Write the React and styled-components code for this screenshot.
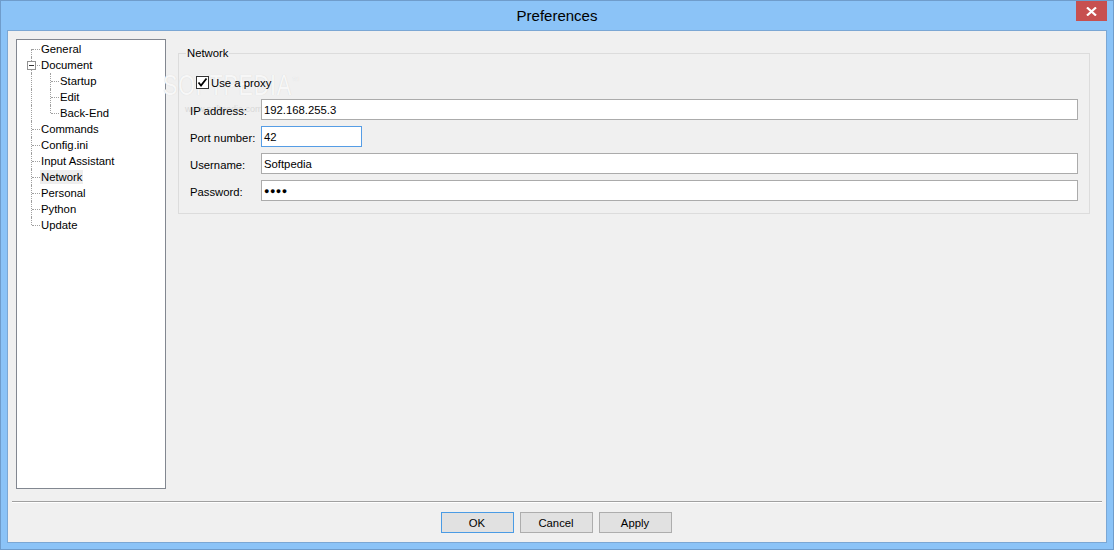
import React from 'react'
import styled, { createGlobalStyle, css } from 'styled-components'

const tree = [
	{ label: 'General', level: 0 },
	{ label: 'Document', level: 0, expanded: true },
	{ label: 'Startup', level: 1 },
	{ label: 'Edit', level: 1 },
	{ label: 'Back-End', level: 1, last: true },
	{ label: 'Commands', level: 0 },
	{ label: 'Config.ini', level: 0 },
	{ label: 'Input Assistant', level: 0 },
	{ label: 'Network', level: 0, selected: true },
	{ label: 'Personal', level: 0 },
	{ label: 'Python', level: 0 },
	{ label: 'Update', level: 0, last: true },
]

const fields = [
	{ label: 'IP address:', value: '192.168.255.3' },
	{ label: 'Port number:', value: '42', narrow: true, focused: true },
	{ label: 'Username:', value: 'Softpedia' },
	{ label: 'Password:', value: '●●●●', secret: true },
]

export default function App() {
	return (
		<>
			<GlobalStyle />
			<Frame>
				<TitleBar>
					<span />
					<Title>Preferences</Title>
					<CloseButton>
						<svg width="11" height="9" viewBox="0 0 11 9">
							<path d="M1 0.5 L10 8.5 M10 0.5 L1 8.5" stroke="#fff" strokeWidth="2.2" />
						</svg>
					</CloseButton>
				</TitleBar>
				<Client>
					<Main>
						<Tree>
							{tree.map((item, i) => (
								<TreeRow key={item.label}>
									{item.level === 1 && <Guide pass />}
									<Guide first={i === 0} last={item.last}>
										{item.expanded && <Expander />}
									</Guide>
									<TreeLabel selected={item.selected}>{item.label}</TreeLabel>
								</TreeRow>
							))}
						</Tree>
						<Pane>
							<Watermark>
								<span>SOFTPEDIA<sup>™</sup></span>
								<small>www.softpedia.com</small>
							</Watermark>
							<Group>
								<Legend>Network</Legend>
								<CheckRow>
									<svg width="13" height="13" viewBox="0 0 13 13">
										<rect x="0.5" y="0.5" width="12" height="12" fill="#fff" stroke="#333" />
										<path d="M2.5 6.5 L5 9.5 L10.5 2.5" fill="none" stroke="#000" strokeWidth="1.8" />
									</svg>
									<span>Use a proxy</span>
								</CheckRow>
								<Form>
									{fields.map(f => (
										<React.Fragment key={f.label}>
											<FieldLabel>{f.label}</FieldLabel>
											<Input narrow={f.narrow} focused={f.focused} secret={f.secret}>{f.value}</Input>
										</React.Fragment>
									))}
								</Form>
							</Group>
						</Pane>
					</Main>
					<Separator />
					<Buttons>
						<Button primary>OK</Button>
						<Button>Cancel</Button>
						<Button>Apply</Button>
					</Buttons>
				</Client>
			</Frame>
		</>
	)
}

const GlobalStyle = createGlobalStyle`
	html, body {
		margin: 0;
		padding: 0;
		background: #8bc3f7;
	}
	body {
		font-family: "Liberation Sans", Arial, sans-serif;
		font-size: 11.3px;
		color: #000;
	}
`

const Frame = styled.div`
	width: 1114px;
	height: 550px;
	box-sizing: border-box;
	border: 1px solid #6f9ccb;
	background: #8bc3f7;
	padding: 0 6px 6px;
	display: flex;
	flex-direction: column;
`

const TitleBar = styled.div`
	height: 29px;
	flex: none;
	display: grid;
	grid-template-columns: 1fr auto 1fr;
	align-items: start;
`

const Title = styled.div`
	align-self: center;
	font-size: 15px;
	line-height: 18px;
	padding-top: 1px;
	color: #000;
`

const CloseButton = styled.div`
	justify-self: end;
	width: 31px;
	height: 20px;
	background: #c75050;
	display: flex;
	align-items: center;
	justify-content: center;
`

const Client = styled.div`
	flex: 1;
	border: 1px solid #7ba7d4;
	background: #f0f0f0;
	display: flex;
	flex-direction: column;
	padding: 8px 0 9px;
	min-height: 0;
`

const Main = styled.div`
	flex: 1;
	display: flex;
	gap: 12px;
	padding: 0 16px 0 8px;
	min-height: 0;
`

const Tree = styled.div`
	width: 150px;
	box-sizing: border-box;
	border: 1px solid #828790;
	background: #fff;
	padding: 1px 0 0 5px;
	flex: none;
`

const TreeRow = styled.div`
	display: flex;
	align-items: center;
	height: 16px;
`

const dotted = '1px dotted #a0a0a0'

const Guide = styled.span`
	position: relative;
	width: 19px;
	height: 16px;
	flex: none;

	&::before {
		content: '';
		position: absolute;
		left: 9px;
		top: ${p => (p.first ? '8px' : '0')};
		bottom: ${p => (p.last ? '8px' : '0')};
		border-left: ${dotted};
	}

	${p => !p.pass && css`
		&::after {
			content: '';
			position: absolute;
			left: 10px;
			top: 8px;
			width: 8px;
			border-top: ${dotted};
		}
	`}
`

const Expander = styled.span`
	position: absolute;
	left: 5px;
	top: 4px;
	width: 7px;
	height: 7px;
	border: 1px solid #919191;
	background: #fff;
	z-index: 1;

	&::after {
		content: '';
		position: absolute;
		left: 1px;
		top: 3px;
		width: 5px;
		height: 1px;
		background: #333;
	}
`

const TreeLabel = styled.span`
	padding: 0 1px;
	margin-left: -1px;
	line-height: 14px;
	white-space: nowrap;
	background: ${p => (p.selected ? '#eeeeee' : 'transparent')};
`

const Pane = styled.div`
	flex: 1;
	position: relative;
	padding-top: 8px;
`

const Group = styled.fieldset`
	position: relative;
	margin: 0;
	border: 1px solid #dcdcdc;
	padding: 16px 11px 12px 11px;
`

const Legend = styled.legend`
	padding: 0 1px;
	margin-left: -4px;
	line-height: 13px;
	color: #000;
`

const CheckRow = styled.label`
	display: flex;
	align-items: center;
	gap: 2px;
	height: 13px;
	margin: 0 0 10px 6px;

	svg {
		flex: none;
	}
`

const Form = styled.div`
	display: grid;
	grid-template-columns: 71px 1fr;
	row-gap: 6px;
	align-items: center;
`

const FieldLabel = styled.div`
	white-space: nowrap;
	padding-top: 2px;
`

const Input = styled.div`
	height: 21px;
	box-sizing: border-box;
	width: ${p => (p.narrow ? '101px' : 'auto')};
	border: 1px solid ${p => (p.focused ? '#569de5' : '#ababab')};
	background: #fff;
	padding: 0 2px;
	display: flex;
	align-items: center;
	font-size: ${p => (p.secret ? '9px' : '11.3px')};
	letter-spacing: ${p => (p.secret ? '0.5px' : '0')};
`

const Watermark = styled.div`
	position: absolute;
	left: -15px;
	top: 27px;
	display: flex;
	flex-direction: column;
	pointer-events: none;
	z-index: 0;

	span {
		display: block;
		font-size: 30px;
		line-height: 30px;
		letter-spacing: 1px;
		color: #f7f7f7;
		text-shadow: 0 0 1px #d4d4d4;
		transform: scaleX(0.72);
		transform-origin: left top;
		white-space: nowrap;
	}

	sup {
		font-size: 10px;
	}

	small {
		font-size: 9px;
		margin: 4px 0 0 22px;
		color: #d8d8d8;
	}
`

const Separator = styled.div`
	height: 1px;
	margin: 12px 4px 0;
	background: #a0a0a0;
	border-bottom: 1px solid #fff;
	flex: none;
`

const Buttons = styled.div`
	display: flex;
	justify-content: center;
	gap: 6px;
	margin-top: 9px;
	padding-right: 2px;
	flex: none;
`

const Button = styled.div`
	width: 73px;
	height: 21px;
	box-sizing: border-box;
	border: 1px solid ${p => (p.primary ? '#4a9be4' : '#adadad')};
	background: #e1e1e1;
	display: flex;
	align-items: center;
	justify-content: center;
`
